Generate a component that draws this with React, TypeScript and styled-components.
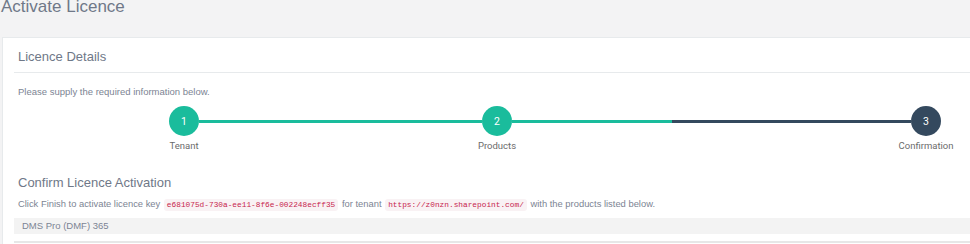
import React from 'react';
import styled, { createGlobalStyle } from 'styled-components';

const Global = createGlobalStyle`
  html, body { margin: 0; padding: 0; background: #f3f3f4; overflow: hidden; }
  body { font-family: "Liberation Sans", Arial, sans-serif; }
`;

const TEAL = '#1abc9c';
const DARK = '#34495e';

const Page = styled.div`
  width: 1000px;
  padding-left: 2px;
`;

const Title = styled.h1`
  margin: 0 0 0 -1px;
  height: 14px;
  font-size: 17px;
  line-height: 14px;
  font-weight: 400;
  color: #6f7888;
`;

const Card = styled.section`
  margin-top: 23px;
  background: #fff;
  border-top: 1px solid #e7eaec;
  border-left: 1px solid #e7eaec;
  min-height: 230px;
`;

const CardHeader = styled.h2`
  margin: 0 0 0 11px;
  padding: 12px 0 9px 4px;
  font-size: 13px;
  line-height: 13px;
  font-weight: 400;
  color: #6f7888;
  border-bottom: 1px solid #e7eaec;
`;

const CardBody = styled.div`
  padding-left: 15px;
`;

const Hint = styled.p`
  margin: 14px 0 0;
  font-size: 9.5px;
  line-height: 10px;
  color: #7c8493;
`;

const Stepper = styled.div`
  display: flex;
  align-items: flex-start;
  margin: 9px 0 0 151px;
  font-family: Roboto, "Liberation Sans", sans-serif;
`;

const Step = styled.div`
  display: flex;
  flex-direction: column;
  align-items: center;
  width: 30px;
  flex: none;
`;

const Circle = styled.div<{ $done: boolean }>`
  width: 30px;
  height: 30px;
  border-radius: 50%;
  background: ${(p) => (p.$done ? TEAL : DARK)};
  color: #fff;
  font-size: 10.5px;
  display: flex;
  align-items: center;
  justify-content: center;
`;

const StepLabel = styled.div`
  margin-top: 4px;
  font-size: 9.5px;
  line-height: 12px;
  color: #6b6b6b;
  white-space: nowrap;
`;

const Connector = styled.div<{ $width: number; $progress: number }>`
  flex: none;
  width: ${(p) => p.$width}px;
  height: 3px;
  margin-top: 13.5px;
  background: linear-gradient(
    to right,
    ${TEAL} 0%,
    ${TEAL} ${(p) => p.$progress}%,
    ${DARK} ${(p) => p.$progress}%,
    ${DARK} 100%
  );
`;

const SectionTitle = styled.h3`
  margin: 24px 0 0;
  font-size: 13px;
  line-height: 13px;
  font-weight: 400;
  color: #6f7888;
`;

const Para = styled.p`
  margin: 10px 0 0;
  font-size: 9.4px;
  line-height: 10px;
  color: #7c8493;
`;

const Code = styled.code`
  font-family: "Liberation Mono", "DejaVu Sans Mono", monospace;
  font-size: 7.8px;
  color: #c7254e;
  background: #f9f2f4;
  padding: 2px 3px;
  margin: 0 1px;
  border-radius: 3px;
`;

const Table = styled.div`
  margin: 8px 0 0 -4px;
  padding-bottom: 7px;
  border-bottom: 2px solid #e7e7e7;
`;

const Row = styled.div`
  height: 16px;
  padding-left: 8px;
  background: #f3f3f3;
  font-size: 9.5px;
  line-height: 16px;
  color: #7c8493;
`;

const steps = [
  { n: 1, label: 'Tenant', done: true },
  { n: 2, label: 'Products', done: true },
  { n: 3, label: 'Confirmation', done: false },
];

const connectors = [
  { width: 283, progress: 100 },
  { width: 399, progress: 40 },
];

export default function App() {
  return (
    <>
      <Global />
      <Page>
        <Title>Activate Licence</Title>
        <Card>
          <CardHeader>Licence Details</CardHeader>
          <CardBody>
            <Hint>Please supply the required information below.</Hint>
            <Stepper>
              {steps.map((s, i) => (
                <React.Fragment key={s.n}>
                  <Step>
                    <Circle $done={s.done}>{s.n}</Circle>
                    <StepLabel>{s.label}</StepLabel>
                  </Step>
                  {i < connectors.length && (
                    <Connector $width={connectors[i].width} $progress={connectors[i].progress} />
                  )}
                </React.Fragment>
              ))}
            </Stepper>
            <SectionTitle>Confirm Licence Activation</SectionTitle>
            <Para>
              Click Finish to activate licence key <Code>e681075d-730a-ee11-8f6e-002248ecff35</Code> for tenant{' '}
              <Code>https://z0nzn.sharepoint.com/</Code> with the products listed below.
            </Para>
            <Table>
              <Row>DMS Pro (DMF) 365</Row>
            </Table>
          </CardBody>
        </Card>
      </Page>
    </>
  );
}
